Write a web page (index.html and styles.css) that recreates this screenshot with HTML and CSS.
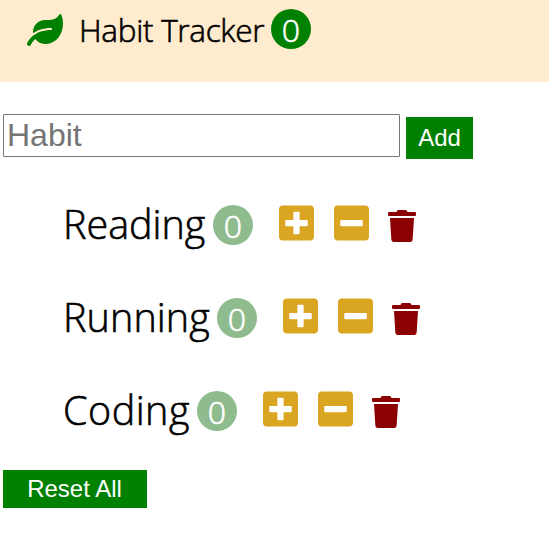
FILE: index.html
```
<!DOCTYPE html>
<html lang="en">
<head>
<meta charset="utf-8">
<title>Habit Tracker</title>
<link rel="stylesheet" href="styles.css">
</head>
<body>
<svg class="defs" aria-hidden="true">
  <symbol id="plus" viewBox="0 0 448 512"><path d="M400 32H48C21.5 32 0 53.5 0 80v352c0 26.5 21.5 48 48 48h352c26.5 0 48-21.5 48-48V80c0-26.5-21.5-48-48-48zm-32 252c0 6.6-5.4 12-12 12h-92v92c0 6.6-5.4 12-12 12h-56c-6.6 0-12-5.4-12-12v-92H92c-6.6 0-12-5.4-12-12v-56c0-6.6 5.4-12 12-12h92v-92c0-6.6 5.4-12 12-12h56c6.6 0 12 5.4 12 12v92h92c6.6 0 12 5.4 12 12v56z"/></symbol>
  <symbol id="minus" viewBox="0 0 448 512"><path d="M400 32H48C21.5 32 0 53.5 0 80v352c0 26.5 21.5 48 48 48h352c26.5 0 48-21.5 48-48V80c0-26.5-21.5-48-48-48zM92 296c-6.6 0-12-5.4-12-12v-56c0-6.6 5.4-12 12-12h264c6.6 0 12 5.4 12 12v56c0 6.6-5.4 12-12 12H92z"/></symbol>
  <symbol id="trash" viewBox="0 0 448 512"><path d="M432 32H312l-9.4-18.7A24 24 0 0 0 281.1 0H166.8a23.72 23.72 0 0 0-21.4 13.3L136 32H16A16 16 0 0 0 0 48v32a16 16 0 0 0 16 16h416a16 16 0 0 0 16-16V48a16 16 0 0 0-16-16zM53.2 467a48 48 0 0 0 47.9 45h245.8a48 48 0 0 0 47.9-45L416 128H32z"/></symbol>
</svg>
<header class="navbar">
  <svg class="leaf" viewBox="0 0 576 512"><path d="M546.2 9.7c-5.6-12.5-21.6-13-28.3-1.2C486.9 62.4 431.4 96 368 96h-80C182 96 96 182 96 288c0 7 .8 13.7 1.5 20.5C161.3 262.8 253.4 224 384 224c8.8 0 16 7.2 16 16s-7.2 16-16 16C132.6 256 26 410.1 2.4 468c-6.6 16.3 1.2 34.9 17.5 41.6 16.4 6.8 35-1.1 41.8-17.3 1.5-3.6 20.9-47.9 71.9-90.6 32.4 43.9 94 85.8 174.9 77.2C465.5 467.5 576 326.7 576 154.3c0-50.2-10.8-102.2-29.8-144.6z"/></svg>
  <span class="title">Habit Tracker</span>
  <span class="count total">0</span>
</header>
<main>
  <form class="add-form">
    <input class="add-input" type="text" placeholder="Habit">
    <button class="add-button" type="button">Add</button>
  </form>
  <ul class="habits">
    <li class="habit">
      <span class="name reading">Reading</span><span class="count">0</span>
      <button class="icon-button"><svg class="square"><use href="#plus"/></svg></button>
      <button class="icon-button"><svg class="square"><use href="#minus"/></svg></button>
      <button class="icon-button"><svg class="trash"><use href="#trash"/></svg></button>
    </li>
    <li class="habit">
      <span class="name running">Running</span><span class="count">0</span>
      <button class="icon-button"><svg class="square"><use href="#plus"/></svg></button>
      <button class="icon-button"><svg class="square"><use href="#minus"/></svg></button>
      <button class="icon-button"><svg class="trash"><use href="#trash"/></svg></button>
    </li>
    <li class="habit">
      <span class="name coding">Coding</span><span class="count">0</span>
      <button class="icon-button"><svg class="square"><use href="#plus"/></svg></button>
      <button class="icon-button"><svg class="square"><use href="#minus"/></svg></button>
      <button class="icon-button"><svg class="trash"><use href="#trash"/></svg></button>
    </li>
  </ul>
  <button class="reset" type="button">Reset All</button>
</main>
</body>
</html>
```
FILE: styles.css
```
* { box-sizing: border-box; }
body {
  margin: 0;
  background: #fff;
  color: #000;
  font-family: "Segoe UI", "Open Sans", "Noto Sans", sans-serif;
  font-weight: 300;
}
button { border: 0; padding: 0; font-family: "Liberation Sans", Arial, sans-serif; }
.defs { display: none; }
.navbar {
  display: flex;
  align-items: flex-start;
  height: 82px;
  padding: 9px 0 0 27px;
  background: blanchedalmond;
}
.leaf { width: 36px; height: 32px; margin: 5px 16px 0 0; fill: green; }
.title, .name, .count { -webkit-text-stroke: 0.6px currentColor; }
.title {
  width: 192px;
  font-size: 31.5px;
  line-height: 41px;
  letter-spacing: -0.3px;
  white-space: nowrap;
}
.count {
  flex: none;
  width: 40px;
  height: 40px;
  border-radius: 50%;
  background: darkseagreen;
  color: #fff;
  font-size: 32px;
  line-height: 41px;
  text-align: center;
}
.total { background: green; }
.add-form { display: flex; gap: 6px; padding: 32px 0 0 3px; }
.add-input {
  width: 397px;
  height: 43px;
  padding: 1px 3px;
  border: 1px solid #767676;
  border-radius: 1px;
  font: 32px "Liberation Sans", Arial, sans-serif;
}
.add-input::placeholder { color: #757575; }
.add-button {
  width: 67px;
  height: 42px;
  margin-top: 3px;
  background: green;
  color: #fff;
  font-size: 24px;
}
.habits { list-style: none; margin: 0; padding: 46px 0 0 63px; }
.habit { display: flex; height: 93px; }
.name {
  height: 40px;
  font-size: 39.5px;
  line-height: 39px;
  white-space: nowrap;
}
.reading { width: 150px; letter-spacing: 0; }
.running { width: 154px; letter-spacing: 0.1px; }
.coding { width: 134px; letter-spacing: 0.5px; }
.icon-button { display: flex; height: 40px; background: none; }
.count + .icon-button { margin-left: 26px; }
.icon-button + .icon-button { margin-left: 20px; }
.icon-button:last-child { margin-left: 19px; }
.square { width: 35px; height: 40px; margin-top: -2px; fill: goldenrod; }
.trash { width: 28px; height: 32px; margin-top: 5px; fill: darkred; }
.reset {
  display: block;
  width: 144px;
  height: 38px;
  margin: -14px 0 0 3px;
  padding-right: 1px;
  background: green;
  color: #fff;
  font-size: 24px;
}
```
